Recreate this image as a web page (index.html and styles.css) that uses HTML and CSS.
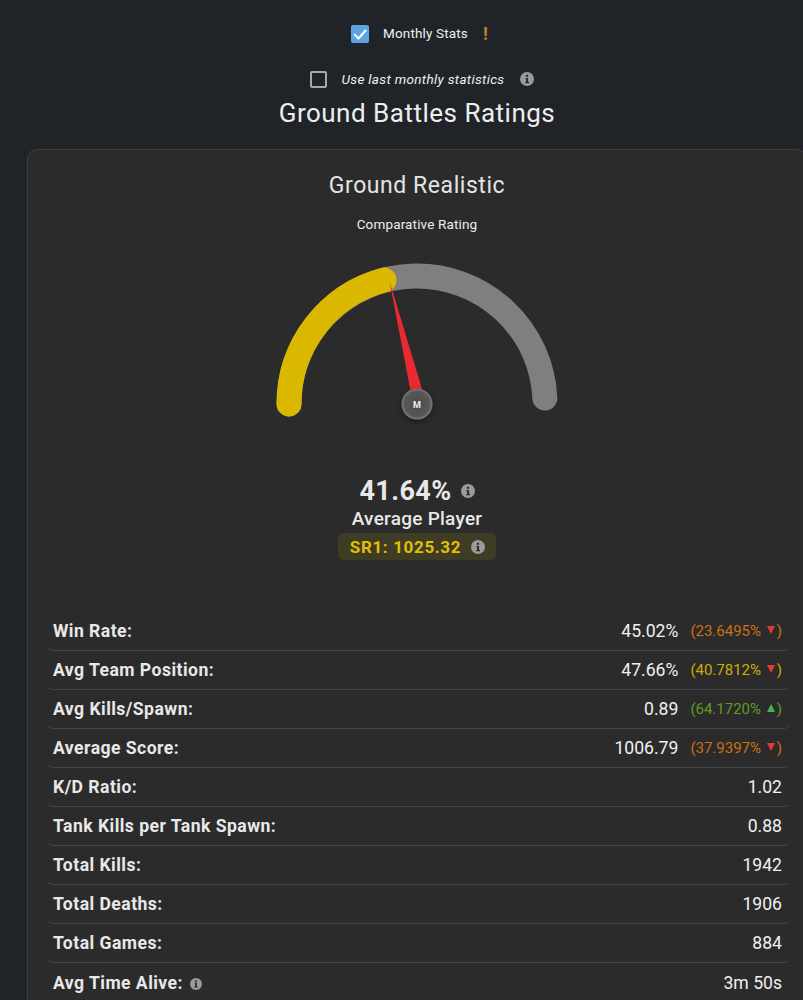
FILE: index.html
```html
<!DOCTYPE html>
<html lang="en">
<head>
<meta charset="utf-8">
<title>Ground Battles Ratings</title>
<link rel="stylesheet" href="styles.css">
</head>
<body>
<svg class="defs" width="0" height="0">
  <symbol id="info" viewBox="0 0 14 14">
    <circle cx="7" cy="7" r="7" fill="#9a9a9a"/>
    <rect x="5.900" y="2.800" width="2.200" height="2" fill="#2b2b2b"/>
    <path d="M5.400 5.900h2.700v4.100h.9v1.200H5.200V10h.9V7.100h-.7z" fill="#2b2b2b"/>
  </symbol>
</svg>
<main class="page">
  <div class="option option-monthly">
    <span class="box box-on">
      <svg viewBox="0 0 18 18" width="18" height="18"><path d="M3.200 9.200l4.300 4.300L15 5" fill="none" stroke="#fff" stroke-width="2"/></svg>
    </span>
    <span class="option-label">Monthly Stats</span>
    <span class="bang">!</span>
  </div>
  <div class="option option-last">
    <span class="box box-off"></span>
    <span class="option-label option-italic">Use last monthly statistics</span>
    <svg class="info info-last"><use href="#info"/></svg>
  </div>
  <h1 class="title">Ground Battles Ratings</h1>

  <section class="card">
    <h2 class="mode">Ground Realistic</h2>
    <p class="sub">Comparative Rating</p>
    <svg class="gauge" width="300" height="170" viewBox="267 254 300 170">
      <defs>
        <radialGradient id="hub" cx="50%" cy="50%" r="50%">
          <stop offset="0%" stop-color="#4a4a4a"/>
          <stop offset="100%" stop-color="#5a5a5a"/>
        </radialGradient>
        <filter id="shadow" x="-50%" y="-50%" width="200%" height="200%">
          <feDropShadow dx="0" dy="2" stdDeviation="3" flood-color="#000" flood-opacity=".45"/>
        </filter>
      </defs>
      <path d="M289 404A128 128 0 0 1 544.860 398" fill="none" stroke="#7f7f7f" stroke-width="25" stroke-linecap="round"/>
      <path d="M289 404A128 128 0 0 1 384 280" fill="none" stroke="#dbb800" stroke-width="25" stroke-linecap="round"/>
      <path d="M389.500 281L423.500 394 411.500 396z" fill="#ea2a30"/>
      <circle cx="417" cy="404" r="14.500" fill="url(#hub)" stroke="#6f6f6f" stroke-width="2" filter="url(#shadow)"/>
      <text class="hub-text" x="417" y="407.500" text-anchor="middle">M</text>
    </svg>
    <div class="score">
      <span>41.64%</span>
      <svg class="info info-score"><use href="#info"/></svg>
    </div>
    <div class="rank">Average Player</div>
    <div class="sr">
      <span>SR1: 1025.32</span>
      <svg class="info info-sr"><use href="#info"/></svg>
    </div>

    <div class="rows">
      <div class="row"><span class="label">Win Rate:</span><span class="value">45.02%</span><span class="cmp cmp-orange">(23.6495% <i class="tri tri-down"></i>)</span></div>
      <div class="row"><span class="label">Avg Team Position:</span><span class="value">47.66%</span><span class="cmp cmp-yellow">(40.7812% <i class="tri tri-down"></i>)</span></div>
      <div class="row"><span class="label">Avg Kills/Spawn:</span><span class="value">0.89</span><span class="cmp cmp-green">(64.1720% <i class="tri tri-up"></i>)</span></div>
      <div class="row"><span class="label">Average Score:</span><span class="value">1006.79</span><span class="cmp cmp-orange">(37.9397% <i class="tri tri-down"></i>)</span></div>
      <div class="row"><span class="label">K/D Ratio:</span><span class="value">1.02</span></div>
      <div class="row"><span class="label">Tank Kills per Tank Spawn:</span><span class="value">0.88</span></div>
      <div class="row"><span class="label">Total Kills:</span><span class="value">1942</span></div>
      <div class="row"><span class="label">Total Deaths:</span><span class="value">1906</span></div>
      <div class="row"><span class="label">Total Games:</span><span class="value">884</span></div>
      <div class="row"><span class="label">Avg Time Alive: <svg class="info info-row"><use href="#info"/></svg></span><span class="value">3m 50s</span></div>
    </div>
  </section>
</main>
</body>
</html>
```
FILE: styles.css
```css
html, body {
  margin: 0;
  height: 1000px;
  overflow: hidden;
  background: #202429;
}
body {
  font-family: Roboto, "Liberation Sans", sans-serif;
  color: #e6e6e6;
}
.defs { display: block; height: 0; }
.page {
  width: 780px;
  margin-left: 27px;
  padding-top: 25px;
}
.option {
  display: flex;
  justify-content: center;
  align-items: center;
  font-size: 13.5px;
  letter-spacing: .15px;
  color: #f0f0f0;
}
.option-monthly { height: 18px; gap: 14px; padding-left: 5px; margin-top: -1px; }
.option-last { height: 18px; margin-top: 28px; gap: 15px; padding-left: 10px; }
.option-italic { font-style: italic; letter-spacing: .33px; }
.box { display: block; width: 18px; height: 18px; box-sizing: border-box; border-radius: 2px; }
.box-on { background: #5ba6e2; margin-top: 2px; }
.box-on svg { display: block; }
.box-off { border: 2px solid #a8a8a8; width: 17px; height: 17px; }
.bang { margin-left: 1px; color: #c47f32; font-size: 18px; font-weight: 700; }
.info { display: inline-block; width: 14px; height: 14px; }
.info-last { margin-left: 1px; }
.title {
  margin: 9px 0 0;
  font-size: 26px;
  letter-spacing: .5px;
  line-height: 32px;
  font-weight: 400;
  text-align: center;
  color: #eeeeee;
}
.card {
  margin-top: 20px;
  box-sizing: border-box;
  height: 900px;
  background: #2b2b2b;
  border: 1px solid #3b3d3f;
  border-radius: 10px;
  text-align: center;
}
.mode {
  margin: 22px 0 0;
  font-size: 23px;
  letter-spacing: .55px;
  line-height: 28px;
  font-weight: 400;
  color: #e4e4e4;
}
.sub {
  margin: 16px 0 0;
  font-size: 13.5px;
  letter-spacing: .15px;
  line-height: 16px;
  color: #eeeeee;
}
.gauge { display: block; margin: 22px auto 0; }
.hub-text { font: 700 9px Roboto, sans-serif; fill: #f2f2f2; }
.score {
  display: flex;
  justify-content: center;
  align-items: center;
  gap: 9px;
  margin-top: 51px;
  font-size: 27px;
  letter-spacing: .4px;
  line-height: 32px;
  font-weight: 700;
  color: #e8e8e8;
}
.rank { font-size: 19px; letter-spacing: .25px; line-height: 24px; font-weight: 500; color: #e8e8e8; }
.sr {
  display: flex;
  width: fit-content;
  margin: 2px auto 0;
  padding: 0 11px 0 12px;
  height: 27px;
  align-items: center;
  gap: 10px;
  box-sizing: border-box;
  background: #3f3c24;
  border-radius: 6px;
  font-size: 17px;
  letter-spacing: .65px;
  font-weight: 700;
  color: #e0c000;
}
.rows { margin: 52px 16px 0 19px; text-align: left; }
.row {
  display: flex;
  align-items: center;
  height: 39px;
  box-sizing: border-box;
  padding: 0 8px 0 6px;
  border-bottom: 1px solid #454545;
  border-radius: 0 0 6px 6px;
  font-size: 17.6px;
}
.row:last-child { border-bottom: 0; }
.label { flex: 1; font-weight: 700; letter-spacing: .45px; color: #e8e8e8; }
.info-row { width: 12px; height: 12px; margin-left: 2px; vertical-align: -1px; }
.value { color: #f0f0f0; }
.cmp { margin-left: 12px; font-size: 15px; }
.cmp-orange { color: #cc7010; }
.cmp-yellow { color: #ccae00; }
.cmp-green { color: #5f9a22; }
.tri { display: inline-block; width: 0; height: 0; margin: 0 2px; border-left: 4px solid transparent; border-right: 4px solid transparent; vertical-align: 2px; }
.tri-down { border-top: 8px solid #e53935; }
.tri-up { border-bottom: 8px solid #4caf50; }
```
